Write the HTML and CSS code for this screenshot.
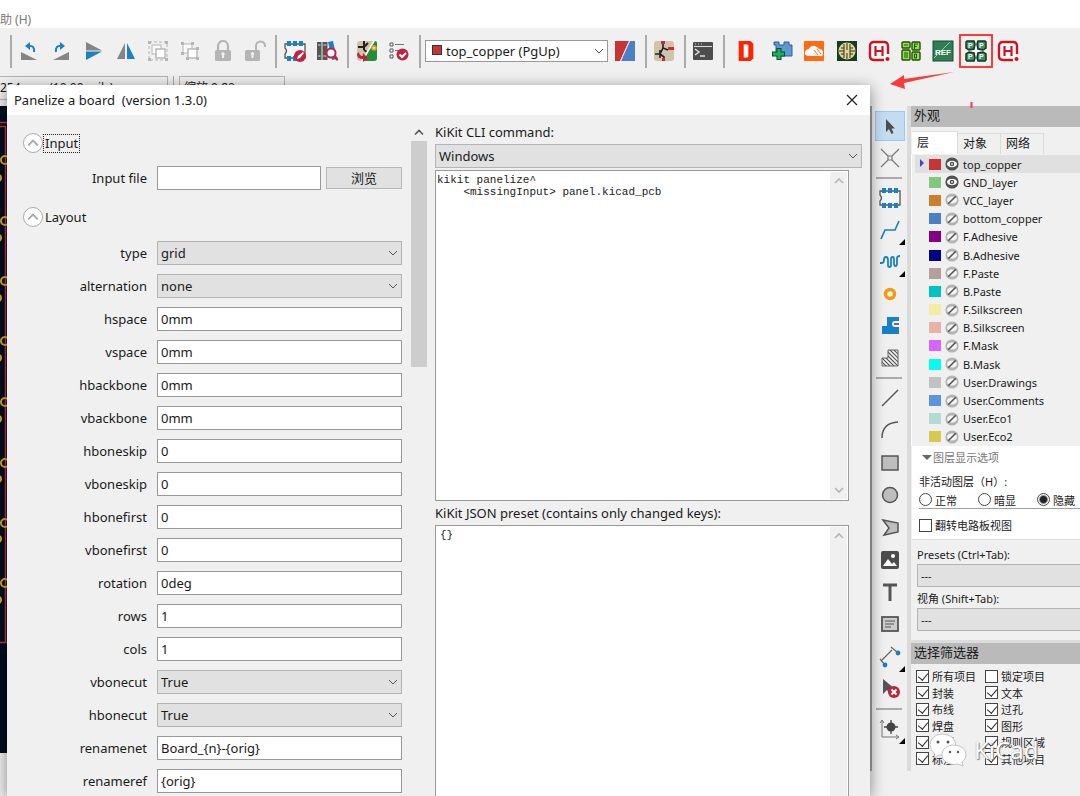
FILE: index.html
```html
<!DOCTYPE html>
<html lang="zh-CN">
<head>
<meta charset="utf-8">
<title>Panelize a board</title>
<link rel="stylesheet" href="styles.css">
</head>
<body>
<svg class="defs" aria-hidden="true">
  <defs>
    <symbol id="chev-down" viewBox="0 0 10 10"><path d="M1 3l4 4 4-4" fill="none" stroke="currentColor"/></symbol>
    <symbol id="chev-up" viewBox="0 0 10 10"><path d="M1 7l4-4 4 4" fill="none" stroke="currentColor" stroke-width="1.6"/></symbol>
    <symbol id="eye-on" viewBox="0 0 14 14"><circle cx="7" cy="7" r="6.6" fill="#505050"/><ellipse cx="7" cy="7" rx="5" ry="3.2" fill="#fff"/><circle cx="7" cy="7" r="2.3" fill="#505050"/><circle cx="7" cy="7" r="1" fill="#ddd"/></symbol>
    <symbol id="eye-off" viewBox="0 0 14 14"><circle cx="7" cy="7" r="6.6" fill="#b4b4b4"/><ellipse cx="7" cy="7" rx="5" ry="3.4" fill="#f4f4f4"/><path d="M3.2 10.8l7.6-7.6" stroke="#555" stroke-width="1.6"/></symbol>
    <symbol id="huaqiu" viewBox="0 0 22 22"><path d="M20 14V6q0-4-4-4H6Q2 2 2 6v10q0 4 4 4h10" fill="#fff" stroke="#d0121f" stroke-width="2.4"/><path d="M7.500 6v10M14.500 6v10M7 11h8" stroke="#d0121f" stroke-width="2.200"/><circle cx="19.500" cy="19" r="2" fill="#d0121f"/></symbol>
    <symbol id="footprint" viewBox="0 0 22 22"><path d="M1 4h20v14H1v-4q3-3 0-6z" fill="#f5f5f5" stroke="#555" stroke-width="1.3"/><path d="M3 1h4v5H3zM9 1h4v5H9zM15 1h4v5h-4zM3 16h4v5H3zM9 16h4v5H9zM15 16h4v5h-4z" fill="#1a81c4"/></symbol>
    <clipPath id="step"><path d="M9 3h10v16H3v-8h6z"/></clipPath>
  </defs>
</svg>
<div class="app">
  <nav class="menubar"><a class="menu" href="#">助 (H)</a></nav>

  <header class="toolbar">
    <span class="sep"></span>
    <div class="group wide">
      <button class="tool" aria-label="Rotate left"><svg viewBox="0 0 22 22"><path d="M3 12v8h16z" fill="#858585"/><path d="M10 6q7-1 6 6" fill="none" stroke="#1a81c4" stroke-width="2"/><path d="M7 6l5-4v8z" fill="#1a81c4"/></svg></button>
      <button class="tool" aria-label="Rotate right"><svg viewBox="0 0 22 22"><path d="M19 12v8H3z" fill="#858585"/><path d="M12 6q-7-1-6 6" fill="none" stroke="#1a81c4" stroke-width="2"/><path d="M15 6L10 2v8z" fill="#1a81c4"/></svg></button>
      <button class="tool" aria-label="Flip vertical"><svg viewBox="0 0 22 22"><path d="M3 2l16 8.400H3z" fill="#858585"/><path d="M3 20l16-8.400H3z" fill="#1a81c4"/></svg></button>
      <button class="tool" aria-label="Flip horizontal"><svg viewBox="0 0 22 22"><path d="M2 19L10 3v16z" fill="#858585"/><path d="M20 19L12 3v16z" fill="#1a81c4"/></svg></button>
      <button class="tool" aria-label="Group"><svg viewBox="0 0 22 22"><rect x="2" y="2" width="18" height="18" fill="none" stroke="#b5b5b5" stroke-dasharray="3 2"/><path d="M1 1h3v3H1zM18 1h3v3h-3zM1 18h3v3H1zM18 18h3v3h-3z" fill="#b5b5b5"/><rect x="5" y="5" width="9" height="9" fill="#fafafa" stroke="#b5b5b5"/><rect x="9" y="9" width="9" height="9" fill="#fff" stroke="#b5b5b5" stroke-width="1.4"/></svg></button>
      <button class="tool" aria-label="Ungroup"><svg viewBox="0 0 22 22"><rect x="4" y="4" width="9" height="9" fill="#fafafa" stroke="#b5b5b5"/><rect x="9" y="9" width="9" height="9" fill="#fff" stroke="#b5b5b5" stroke-width="1.400"/><path d="M2 2h3v3H2zM12 2h3v3h-3zM2 12h3v3H2zM17 7h3v3h-3zM7 17h3v3H7zM17 17h3v3h-3z" fill="#b5b5b5"/></svg></button>
      <button class="tool" aria-label="Lock"><svg viewBox="0 0 22 22"><path d="M6 11V6a5 5 0 0 1 10 0v5" fill="none" stroke="#b5b5b5" stroke-width="2.200"/><rect x="3" y="10" width="16" height="11" rx="1.500" fill="#b5b5b5"/><path d="M11 12a2 2 0 0 1 1 3.500V18h-2v-2.500a2 2 0 0 1 1-3.500" fill="#eee"/></svg></button>
      <button class="tool" aria-label="Unlock"><svg viewBox="0 0 22 22"><path d="M12 11V6a4.500 4.500 0 0 1 9 0v1" fill="none" stroke="#b5b5b5" stroke-width="2"/><rect x="1" y="10" width="15" height="11" rx="1.500" fill="#b5b5b5"/><path d="M8.500 12a2 2 0 0 1 1 3.500V18h-2v-2.500a2 2 0 0 1 1-3.500" fill="#eee"/></svg></button>
    </div>
    <span class="sep"></span>
    <div class="group pair">
      <button class="tool" aria-label="Footprint editor"><svg viewBox="0 0 22 22"><use href="#footprint"/><circle cx="16" cy="16" r="6" fill="#c0223f"/><path d="M13 19l1-3 5-4 1 1-4 5z" fill="#fff"/></svg></button>
      <button class="tool" aria-label="Footprint libraries"><svg viewBox="0 0 22 22"><path d="M1 2h4.500v18H1zM6.500 2h5v18h-5z" fill="#555"/><path d="M2 5h2.500M7.500 5h3M2 16h2.500M7.500 16h3" stroke="#ddd"/><path d="M12 2l5-1 4 18-5 1z" fill="#1a81c4"/><circle cx="15" cy="13" r="4.500" fill="#fff" stroke="#c0223f" stroke-width="2"/><path d="M18 16l4 4" stroke="#c0223f" stroke-width="2.500"/></svg></button>
    </div>
    <span class="sep"></span>
    <div class="group pair">
      <button class="tool" aria-label="Update PCB"><svg viewBox="0 0 22 22"><rect x="1" y="1" width="20" height="20" rx="3" fill="#d0c3a8"/><path d="M19 1q2 0 2 2v15q0 3-3 3H6z" fill="#2a8b37"/><path d="M8 1v9M2 7h6l4-4M8 10l3 2" stroke="#222" stroke-width="2" fill="none"/><path d="M6 21L18 1" stroke="#fff" stroke-width="1.600"/><circle cx="18" cy="8" r="2" fill="#ddd" stroke="#e2a51c" stroke-width="1.500"/><path d="M3 12q0 4 4 4v-3l5 5-5 4v-3q-6 0-6-5z" fill="#c0223f"/></svg></button>
      <button class="tool" aria-label="Design rules"><svg viewBox="0 0 22 22"><path d="M2 3h3v3H2zM2 9h3v3H2zM2 15h3v3H2z" fill="#fff" stroke="#555"/><path d="M7 4.500h9M7 10.500h4" stroke="#777"/><circle cx="14.500" cy="14.500" r="6" fill="#c0223f"/><path d="M11.500 14.500l2.500 2.500 4-4" fill="none" stroke="#fff" stroke-width="2"/></svg></button>
    </div>
    <span class="sep"></span>
    <div class="pick layer-pick">
      <i class="chip"></i>
      <select aria-label="Active layer"><option>top_copper (PgUp)</option></select>
      <svg class="chev"><use href="#chev-down"/></svg>
    </div>
    <div class="group">
      <button class="tool" aria-label="Layer pair"><svg viewBox="0 0 22 22"><path d="M1 1h14L6 21H1z" fill="#c83434"/><path d="M16 1h5v20H7z" fill="#4d7fc4"/><path d="M15.500 1L6.500 21" stroke="#ddd"/></svg></button>
    </div>
    <span class="sep"></span>
    <div class="group">
      <button class="tool" aria-label="Schematic"><svg viewBox="0 0 22 22"><rect x="1" y="1" width="20" height="20" rx="3" fill="#d0c3a8"/><path d="M10 2v6l5 2M2 14h5l3-6M7 10v8M7 14l4 3v4" fill="none" stroke="#222" stroke-width="1.600"/><path d="M8 1h4v3H8zM15 7h6v3h-6zM9 18h3v3H9z" fill="#d0243f"/></svg></button>
    </div>
    <span class="sep"></span>
    <div class="group">
      <button class="tool" aria-label="Console"><svg viewBox="0 0 22 22"><rect x="1" y="2" width="20" height="18" rx="1" fill="#4d4d4d"/><path d="M2 6.500h18" stroke="#ddd"/><path d="M3 4h1M6 4h1M9 4h1" stroke="#ccc"/><path d="M3 9l4 3-4 3M8 16h5" stroke="#ddd" stroke-width="1.500" fill="none"/></svg></button>
    </div>
    <span class="sep"></span>
    <div class="group letter">
      <button class="tool" aria-label="D plugin"><svg viewBox="0 0 22 24"><path d="M3 1h13l3 3v16l-3 3H3z" fill="#fb2405"/><path d="M8.500 5h4l1 1v12l-1 1h-4z" fill="#fff"/></svg></button>
    </div>
    <div class="group wide">
      <button class="tool" aria-label="Add board"><svg viewBox="0 0 22 22"><path d="M3 5V2h5v3h5V2h5v3h3v11H5V5z" fill="#5b9bd5" stroke="#2e5f91"/><path d="M8 8v12M1 14h13" stroke="#164a2a" stroke-width="5"/><path d="M8 9v10M2 14h11" stroke="#18b35c" stroke-width="3"/></svg></button>
      <button class="tool" aria-label="Cloud"><svg viewBox="0 0 22 22"><rect x="1" y="1" width="20" height="20" rx="1" fill="#ff6b12"/><path d="M5 16q-4-1-3-4t4-3q2-4 6-3 3 1 4 3 4 0 4 4t-3 3z" fill="#fff"/><path d="M11 10l4 5M14 9l4 5" stroke="#ff6b12"/></svg></button>
      <button class="tool" aria-label="Round board"><svg viewBox="0 0 22 22"><rect x="1" y="1" width="20" height="20" fill="#143d26"/><circle cx="11" cy="11" r="8.500" fill="#ecd490"/><path d="M8 4v14M11 3v7M11 13v6M14 4v14M3 11h5M14 11h5M5 8h3M14 8h3M5 14h3M14 14h3" stroke="#143d26" fill="none"/></svg></button>
      <button class="tool" aria-label="Huaqiu DFM"><svg viewBox="0 0 22 22"><use href="#huaqiu"/></svg></button>
      <button class="tool" aria-label="Fabrication files"><svg viewBox="0 0 22 22"><g fill="#8de83b" stroke="#274a12" stroke-width="1.400"><rect x="2" y="2" width="8" height="6" rx="1"/><rect x="12" y="2" width="8" height="8" rx="1"/><rect x="2" y="10" width="8" height="10" rx="1"/><rect x="12" y="12" width="8" height="8" rx="1"/></g><path d="M4 5h4M4 13h4M4 15h4M4 17h4M14.500 4v5M14 4h4M14 6.500h3M14.500 14h2v4h-2z" stroke="#274a12" fill="none"/></svg></button>
      <button class="tool" aria-label="Reference placer"><svg viewBox="0 0 22 22"><rect x="1" y="1" width="20" height="20" fill="#2f7d53" stroke="#1c4a33"/><path d="M2 18L18 2" stroke="#9fcdb3"/><text x="11" y="15" text-anchor="middle" class="glyph ref">REF</text></svg></button>
      <button class="tool marked" aria-label="KiKit panelize"><svg viewBox="0 0 22 22"><g fill="#3f8d60" stroke="#173222" stroke-width="1.500"><path d="M2 1h7l1 3-1 5-5 1-3-2V2zM13 1h7l1 1v6l-3 2-5-1-1-5zM2 21h7l1-3-1-5-5-1-3 2v6zM13 21h7l1-1v-6l-3-2-5 1-1 5z"/></g><path d="M11 7l1 3 3 1-3 1-1 3-1-3-3-1 3-1z" fill="#fff"/><g class="glyph pan"><text x="3" y="8">P</text><text x="14" y="8">P</text><text x="3" y="19">P</text><text x="14" y="19">P</text></g></svg></button>
      <button class="tool" aria-label="Huaqiu order"><svg viewBox="0 0 22 22"><use href="#huaqiu"/></svg></button>
    </div>
  </header>

  <div class="infobar">
    <span class="info track">254 mm (10.00 mils)</span>
    <span class="sep"></span>
    <span class="info zoomlevel">缩放 9.80</span>
  </div>

  <main class="workspace">
    <section class="board">
      <svg class="traces" width="7" height="647" viewBox="0 0 7 647">
        <path d="M0 16.500h7M0 20.500h5M5.500 20v517M0 536.500h7" stroke="#c8343a" stroke-width="1.500" fill="none"/>
        <g fill="none" stroke="#d4ab26" stroke-width="2"><circle cx="5" cy="54" r="4"/><circle cx="5" cy="115" r="4"/><circle cx="5" cy="175" r="4"/><circle cx="5" cy="235" r="4"/><circle cx="5" cy="296" r="4"/><circle cx="5" cy="357" r="4"/><circle cx="5" cy="417" r="4"/><circle cx="5" cy="477" r="4"/></g>
        <g fill="#d4ab26"><circle cx="-2" cy="72" r="4"/><circle cx="-2" cy="132" r="4"/><circle cx="-2" cy="192" r="4"/><circle cx="-2" cy="252" r="4"/><circle cx="-2" cy="313" r="4"/><circle cx="-2" cy="373" r="4"/><circle cx="-2" cy="433" r="4"/><circle cx="-2" cy="494" r="4"/></g>
      </svg>
    </section>

    <aside class="rail">
      <div class="stack two">
        <button class="tool selected" aria-label="Select"><svg viewBox="0 0 22 22"><path d="M7 4v13l3-3 2.500 5 2-1-2-4.500H16z" fill="#4d4d4d"/></svg></button>
        <button class="tool" aria-label="Local ratsnest"><svg viewBox="0 0 22 22"><path d="M2 2l7 7M20 2l-7 7M2 20l7-7M20 20l-7-7M9 9h4v4H9z" fill="none" stroke="#777" stroke-width="1.200"/></svg></button>
      </div>
      <hr class="rule">
      <div class="stack six">
        <button class="tool" aria-label="Footprint"><svg viewBox="0 0 22 22"><use href="#footprint"/></svg></button>
        <button class="tool more" aria-label="Route track"><svg viewBox="0 0 22 22"><path d="M2 20l4-9h10l4-9" fill="none" stroke="#1a81c4" stroke-width="1.700"/></svg></button>
        <button class="tool more" aria-label="Tune length"><svg viewBox="0 0 22 22"><path d="M1 12h2q2 0 2-3t2-3 2 3v5q0 2 1.500 2t1.500-2V8q0-2 1.500-2T15 8v4q0 3 1.500 3t1.500-3V7q0-2 3-2" fill="none" stroke="#1a81c4" stroke-width="1.800"/></svg></button>
        <button class="tool" aria-label="Via"><svg viewBox="0 0 22 22"><circle cx="11" cy="11" r="4.500" fill="none" stroke="#f59b0b" stroke-width="3.400"/></svg></button>
        <button class="tool" aria-label="Zone"><svg viewBox="0 0 22 22"><path d="M8 2h12v4h-4q-3 0-3 3t3 3h4v7H3v-8h5z" fill="#1a81c4"/><path d="M15 9h5" stroke="#444" stroke-width="1.500"/></svg></button>
        <button class="tool" aria-label="Rule area"><svg viewBox="0 0 22 22"><g clip-path="url(#step)"><path d="M2 2h18v18H2z" fill="#f4f4f4"/><path d="M-2 10l14 14M2 10l14 14M2 6l18 18M4 4l18 18M4 0l18 18M8 0l14 14M12 0l10 10M16 0l6 6" stroke="#555" stroke-width="1.200"/></g><path d="M9 3h10v16H3v-8h6z" fill="none" stroke="#666"/></svg></button>
      </div>
      <hr class="rule">
      <div class="stack ten">
        <button class="tool" aria-label="Line"><svg viewBox="0 0 22 22"><path d="M3 19L19 3" stroke="#555" stroke-width="1.500"/></svg></button>
        <button class="tool" aria-label="Arc"><svg viewBox="0 0 22 22"><path d="M3 19Q3 4 19 3" fill="none" stroke="#555" stroke-width="1.500"/></svg></button>
        <button class="tool" aria-label="Rectangle"><svg viewBox="0 0 22 22"><rect x="3" y="4" width="16" height="14" fill="#bebebe" stroke="#555" stroke-width="1.500"/></svg></button>
        <button class="tool" aria-label="Circle"><svg viewBox="0 0 22 22"><circle cx="11" cy="11" r="7.500" fill="#bebebe" stroke="#555" stroke-width="1.500"/></svg></button>
        <button class="tool" aria-label="Polygon"><svg viewBox="0 0 22 22"><path d="M4 4l15 3v9L5 19l5-7z" fill="#bebebe" stroke="#555" stroke-width="1.500"/></svg></button>
        <button class="tool" aria-label="Image"><svg viewBox="0 0 22 22"><rect x="2" y="2" width="18" height="18" rx="2" fill="#4d4d4d"/><path d="M4 17l5-7 4 5 2-2 3 4z" fill="#fff"/><circle cx="14" cy="7" r="2" fill="#fff"/></svg></button>
        <button class="tool" aria-label="Text"><svg viewBox="0 0 22 22"><path d="M4 4h14M11 4v16" stroke="#555" stroke-width="3"/></svg></button>
        <button class="tool" aria-label="Text box"><svg viewBox="0 0 22 22"><rect x="3" y="4" width="16" height="14" fill="#ccc" stroke="#555" stroke-width="1.800"/><path d="M6 8h10M6 11h9M6 14h6" stroke="#555" stroke-width="1.200"/></svg></button>
        <button class="tool more" aria-label="Dimension"><svg viewBox="0 0 22 22"><path d="M3 14L13 4M1 13l5 6M12 1l6 5" stroke="#666" stroke-width="1.200"/><circle cx="6" cy="19" r="2.400" fill="#1a81c4"/><circle cx="19" cy="7" r="2.400" fill="#1a81c4"/></svg></button>
        <button class="tool" aria-label="Delete"><svg viewBox="0 0 22 22"><path d="M4 1v15l4-4 3 5 2-2-2-4h5z" fill="#555"/><circle cx="15" cy="14" r="6" fill="#c0223f"/><path d="M12.500 11.500l5 5M17.500 11.500l-5 5" stroke="#fff" stroke-width="2"/></svg></button>
      </div>
      <hr class="rule">
      <div class="stack one">
        <button class="tool more" aria-label="Origin"><svg viewBox="0 0 22 22"><path d="M3 3v16h16M1 5l2-3 2 3M17 17l3 2-3 2" fill="none" stroke="#777"/><circle cx="12" cy="9" r="4.500" fill="#444"/><path d="M12 2v14M5 9h14" stroke="#444" stroke-width="1.300"/></svg></button>
      </div>
    </aside>

    <aside class="panel">
      <h2 class="caption">外观</h2>
      <div class="tabs"><button class="tab current">层</button><button class="tab">对象</button><button class="tab">网络</button></div>
      <ul class="layers">
        <li class="layer active"><i class="swatch c1"></i><svg class="eye"><use href="#eye-on"/></svg>top_copper</li>
        <li class="layer"><i class="swatch c2"></i><svg class="eye"><use href="#eye-on"/></svg>GND_layer</li>
        <li class="layer"><i class="swatch c3"></i><svg class="eye"><use href="#eye-off"/></svg>VCC_layer</li>
        <li class="layer"><i class="swatch c4"></i><svg class="eye"><use href="#eye-off"/></svg>bottom_copper</li>
        <li class="layer"><i class="swatch c5"></i><svg class="eye"><use href="#eye-off"/></svg>F.Adhesive</li>
        <li class="layer"><i class="swatch c6"></i><svg class="eye"><use href="#eye-off"/></svg>B.Adhesive</li>
        <li class="layer"><i class="swatch c7"></i><svg class="eye"><use href="#eye-off"/></svg>F.Paste</li>
        <li class="layer"><i class="swatch c8"></i><svg class="eye"><use href="#eye-off"/></svg>B.Paste</li>
        <li class="layer"><i class="swatch c9"></i><svg class="eye"><use href="#eye-off"/></svg>F.Silkscreen</li>
        <li class="layer"><i class="swatch c10"></i><svg class="eye"><use href="#eye-off"/></svg>B.Silkscreen</li>
        <li class="layer"><i class="swatch c11"></i><svg class="eye"><use href="#eye-off"/></svg>F.Mask</li>
        <li class="layer"><i class="swatch c12"></i><svg class="eye"><use href="#eye-off"/></svg>B.Mask</li>
        <li class="layer"><i class="swatch c13"></i><svg class="eye"><use href="#eye-off"/></svg>User.Drawings</li>
        <li class="layer"><i class="swatch c14"></i><svg class="eye"><use href="#eye-off"/></svg>User.Comments</li>
        <li class="layer"><i class="swatch c15"></i><svg class="eye"><use href="#eye-off"/></svg>User.Eco1</li>
        <li class="layer"><i class="swatch c16"></i><svg class="eye"><use href="#eye-off"/></svg>User.Eco2</li>
      </ul>
      <div class="display">
        <button class="fold"><i class="caret"></i>图层显示选项</button>
        <div class="hint">非活动图层（H）:</div>
        <div class="radios">
          <label><input type="radio" name="inactive">正常</label>
          <label><input type="radio" name="inactive">暗显</label>
          <label><input type="radio" name="inactive" checked>隐藏</label>
        </div>
        <label class="flip"><input type="checkbox">翻转电路板视图</label>
      </div>
      <div class="presets">
        <label for="presets">Presets (Ctrl+Tab):</label>
        <select id="presets"><option>---</option></select>
        <label for="views">视角 (Shift+Tab):</label>
        <select id="views"><option>---</option></select>
      </div>
      <h2 class="caption">选择筛选器</h2>
      <div class="filters">
        <label><input type="checkbox" checked>所有项目</label><label><input type="checkbox">锁定项目</label>
        <label><input type="checkbox" checked>封装</label><label><input type="checkbox" checked>文本</label>
        <label><input type="checkbox" checked>布线</label><label><input type="checkbox" checked>过孔</label>
        <label><input type="checkbox" checked>焊盘</label><label><input type="checkbox" checked>图形</label>
        <label><input type="checkbox" checked>敷铜</label><label><input type="checkbox" checked>规则区域</label>
        <label><input type="checkbox" checked>标注</label><label><input type="checkbox" checked>其他项目</label>
        <div class="watermark">
          <svg width="38" height="34" viewBox="0 0 38 34"><g fill="#fff" stroke="#c4c4c4"><path d="M14 1C6 1 1 6 1 12q0 5 5 9l-1 4 5-3q13 2 17-6Q28 2 14 1z"/><path d="M25 12c-7 0-12 4-12 10s7 11 16 9l5 2-1-4q4-3 4-7 0-9-12-10z"/></g><g fill="#555"><circle cx="9" cy="9" r="1.500"/><circle cx="19" cy="9" r="1.500"/><circle cx="21" cy="19" r="1.200"/><circle cx="29" cy="19" r="1.200"/></g></svg>
          <span>KiCad</span>
        </div>
      </div>
    </aside>
  </main>
  <footer class="status"></footer>

  <svg class="marks" width="90" height="42" viewBox="0 0 90 42"><path d="M0 18l14-9v4l50-7-50 11 1 6z" fill="#fb3b3b"/><path d="M81.500 36v6" stroke="#fb3b3b" stroke-width="2"/></svg>

  <div class="dialog" role="dialog" aria-label="Panelize a board">
    <div class="titlebar"><span class="title">Panelize a board&nbsp; (version 1.3.0)</span><button class="close" aria-label="Close"><svg width="12" height="12" viewBox="0 0 12 12"><path d="M1 1l10 10M11 1L1 11" stroke="#222" stroke-width="1.200"/></svg></button></div>
    <div class="columns">
      <form class="form">
        <button type="button" class="section"><span class="disc"><svg width="12" height="12"><use href="#chev-up"/></svg></span><span class="name focus">Input</span></button>
        <div class="field file"><label for="file">Input file</label><input id="file" type="text"><button type="button" class="browse">浏览</button></div>
        <button type="button" class="section second"><span class="disc"><svg width="12" height="12"><use href="#chev-up"/></svg></span><span class="name">Layout</span></button>
        <div class="field"><label for="type">type</label><div class="pick"><select id="type"><option>grid</option></select><svg class="chev"><use href="#chev-down"/></svg></div></div>
        <div class="field"><label for="alternation">alternation</label><div class="pick"><select id="alternation"><option>none</option></select><svg class="chev"><use href="#chev-down"/></svg></div></div>
        <div class="field"><label for="hspace">hspace</label><input id="hspace" type="text" value="0mm"></div>
        <div class="field"><label for="vspace">vspace</label><input id="vspace" type="text" value="0mm"></div>
        <div class="field"><label for="hbackbone">hbackbone</label><input id="hbackbone" type="text" value="0mm"></div>
        <div class="field"><label for="vbackbone">vbackbone</label><input id="vbackbone" type="text" value="0mm"></div>
        <div class="field"><label for="hboneskip">hboneskip</label><input id="hboneskip" type="text" value="0"></div>
        <div class="field"><label for="vboneskip">vboneskip</label><input id="vboneskip" type="text" value="0"></div>
        <div class="field"><label for="hbonefirst">hbonefirst</label><input id="hbonefirst" type="text" value="0"></div>
        <div class="field"><label for="vbonefirst">vbonefirst</label><input id="vbonefirst" type="text" value="0"></div>
        <div class="field"><label for="rotation">rotation</label><input id="rotation" type="text" value="0deg"></div>
        <div class="field"><label for="rows">rows</label><input id="rows" type="text" value="1"></div>
        <div class="field"><label for="cols">cols</label><input id="cols" type="text" value="1"></div>
        <div class="field"><label for="vbonecut">vbonecut</label><div class="pick"><select id="vbonecut"><option>True</option></select><svg class="chev"><use href="#chev-down"/></svg></div></div>
        <div class="field"><label for="hbonecut">hbonecut</label><div class="pick"><select id="hbonecut"><option>True</option></select><svg class="chev"><use href="#chev-down"/></svg></div></div>
        <div class="field"><label for="renamenet">renamenet</label><input id="renamenet" type="text" value="Board_{n}-{orig}"></div>
        <div class="field"><label for="renameref">renameref</label><input id="renameref" type="text" value="{orig}"></div>
      </form>
      <div class="scroll"><svg width="10" height="16" viewBox="0 0 10 10"><use href="#chev-up"/></svg><i class="thumb"></i></div>
      <div class="output">
        <label for="shell">KiKit CLI command:</label>
        <div class="pick"><select id="shell"><option>Windows</option></select><svg class="chev"><use href="#chev-down"/></svg></div>
        <div class="editor cli">
          <textarea aria-label="Command" spellcheck="false">kikit panelize^
    &lt;missingInput&gt; panel.kicad_pcb</textarea>
          <div class="track-bar"><svg width="10" height="10"><use href="#chev-up"/></svg><svg class="turned" width="10" height="10"><use href="#chev-up"/></svg></div>
        </div>
        <label for="json">KiKit JSON preset (contains only changed keys):</label>
        <div class="editor json">
          <textarea id="json" spellcheck="false">{}</textarea>
          <div class="track-bar"><svg width="10" height="10"><use href="#chev-up"/></svg></div>
        </div>
      </div>
    </div>
  </div>
</div>
</body>
</html>
```
FILE: styles.css
```css
* { box-sizing: border-box; }
body { margin: 0; font-family: "Noto Sans", "Noto Sans CJK SC", sans-serif; font-size: 13px; color: #1a1a1a; background: #f0f0f0; }
button, input, select, textarea { font: inherit; color: inherit; margin: 0; }
button { border: 0; background: none; padding: 0; }
svg { display: block; }
.defs { position: absolute; width: 0; height: 0; }
.app { position: relative; height: 100vh; display: flex; flex-direction: column; overflow: hidden; }

.menubar { height: 28px; background: #fff; display: flex; align-items: flex-end; }
.menu { color: #777; text-decoration: none; font-size: 12px; line-height: 16px; }

.toolbar { display: flex; align-items: center; height: 46px; padding-left: 6px; flex: none; }
.sep { height: 33px; flex: none; border-right: 2px solid #ababab; }
.toolbar .sep { width: 6px; margin-right: 1px; }
.group { display: flex; flex: none; }
.group .tool { width: 32px; height: 32px; }
.pair { margin-left: 1px; }
.wide { width: 258px; }
.wide .tool { flex: 1; width: auto; }
.letter { padding-left: 4px; width: 40px; }
.letter svg { height: 24px; }
.tool { display: grid; place-items: center; position: relative; }
.tool svg { width: 22px; height: 22px; }
.marked { outline: 2px solid #f93b3b; outline-offset: -1px; }
.glyph { font-family: "Liberation Sans", sans-serif; font-weight: bold; fill: #fff; }
.ref { font-size: 8px; }
.pan { font-size: 7px; }

.pick { position: relative; }
select { appearance: none; width: 100%; height: 24px; display: block; padding: 0 20px 0 3px; background: #e1e1e1; border: 1px solid #b4b4b4; border-radius: 0; }
.chev { position: absolute; right: 4px; top: 7px; width: 10px; height: 10px; color: #555; }
.layer-pick { width: 183px; margin: 0 1px 0 3px; flex: none; }
.layer-pick select { padding-left: 20px; height: 22px; background: #fff; border-color: #999; }
.layer-pick .chev { top: 6px; }
.chip { position: absolute; left: 7px; top: 5px; width: 10px; height: 10px; background: #c83434; border: 1px solid #333; }

.infobar { display: flex; height: 32px; padding-top: 2px; flex: none; gap: 5px; align-items: flex-start; }
.infobar .sep { width: 1px; height: 26px; border-right-width: 1px; }
.info { height: 24px; line-height: 22px; border: 1px solid #b4b4b4; font-size: 12px; white-space: nowrap; }
.track { width: 168px; border-left: 0; }
.zoomlevel { width: 106px; padding-left: 4px; }

.workspace { flex: 1; display: flex; min-height: 0; }
.status { height: 25px; flex: none; }
.board { flex: 1; border-right: 2px solid #a0a0a0; padding-bottom: 18px; min-width: 0; }
.traces { background: #000e20; height: 100%; }
.rail { width: 39px; padding: 4px 3px 0 2px; border-right: 4px solid #dadada; flex: none; }
.stack { display: grid; grid-auto-rows: 1fr; }
.two { height: 64px; }
.six { height: 192px; }
.ten { height: 323px; }
.one { height: 32px; }
.rail .tool { width: 32px; }
.rail .selected { background: #c3dcf2; border: 1px solid #9ac9ee; margin: 1px; width: 30px; }
.rule { height: 2px; margin: 3px 2px; border: 0; background: #ababab; }
.more::after { content: ""; position: absolute; right: 1px; bottom: 1px; border: 3px solid #000; border-top-color: transparent; border-left-color: transparent; }

.panel { width: 169px; flex: none; white-space: nowrap; font-size: 11px; display: flex; flex-direction: column; }
.caption { margin: 0; height: 21px; line-height: 18px; padding-left: 3px; background: #bababa; font-size: 13px; font-weight: normal; flex: none; }
.tabs { display: flex; align-items: flex-end; padding: 4px 0 0 1px; flex: none; }
.tab { width: 43px; height: 21px; border: 1px solid #dcdcdc; border-left: 0; border-bottom: 0; font-size: 12px; line-height: 20px; padding: 0 0 0 5px; text-align: left; }
.current { width: 46px; height: 23px; background: #fff; }
.layers { list-style: none; margin: 1px 0 0; padding: 0 0 0 3px; height: 291px; display: grid; grid-auto-rows: 1fr; flex: none; border-left: 1px solid #fff; }
.layer { display: flex; align-items: center; padding-left: 14px; gap: 4px; position: relative; }
.active { background: #e0e0e0; }
.active::before { content: ""; position: absolute; left: 5px; top: 4px; border: 4px solid transparent; border-left-color: #4040f0; border-right: 0; }
.swatch { width: 12px; height: 11px; }
.eye { width: 14px; height: 14px; }
.c1 { background: #c83434; } .c2 { background: #7fc87f; } .c3 { background: #ce7d2c; } .c4 { background: #4d7fc4; }
.c5 { background: #840084; } .c6 { background: #000084; } .c7 { background: #b4a09a; } .c8 { background: #00c2c2; }
.c9 { background: #f2eda1; } .c10 { background: #e8b2a7; } .c11 { background: #d864ff; } .c12 { background: #02ffee; }
.c13 { background: #c2c2c2; } .c14 { background: #5994dc; } .c15 { background: #b4dbd2; } .c16 { background: #d8c852; }
.display { background: #fff; height: 94px; padding: 1px 0 0 7px; flex: none; border-bottom: 1px solid #dcdcdc; margin-left: 1px; }
.fold { display: flex; align-items: center; color: #777; height: 20px; gap: 1px; padding-left: 3px; }
.caret { border: 5px solid transparent; border-top-color: #666; border-bottom: 0; }
.hint { height: 26px; line-height: 30px; }
.radios { display: flex; gap: 21px; height: 16px; border-bottom: 1px solid #a0a0a0; padding-bottom: 2px; }
label { display: flex; align-items: center; }
.radios label { gap: 3px; }
.display input, .filters input { appearance: none; width: 13px; height: 13px; border: 1px solid #444; background: #fff; flex: none; position: relative; }
.radios input { border-radius: 50%; }
.radios input:checked { background: radial-gradient(#222 3px, #fff 5px); }
.flip { height: 32px; gap: 3px; }
.presets { padding: 6px 0 0 6px; height: 103px; flex: none; border-bottom: 3px solid #dcdcdc; }
.presets label { height: 18px; padding-bottom: 2px; }
.presets select { border-right: 0; margin-bottom: 3px; height: 23px; }
.filters { position: relative; display: grid; grid-template-columns: 69px 1fr; grid-auto-rows: 1fr; height: 99px; padding-left: 5px; flex: none; margin-top: 4px; }
.filters label { gap: 3px; }
.filters input:checked::after { content: ""; position: absolute; left: 3px; top: 0; width: 5px; height: 8px; border: solid #333; border-width: 0 1px 1px 0; transform: rotate(40deg); }
.watermark { position: absolute; left: 18px; top: 65px; display: flex; align-items: center; gap: 7px; color: #fff; font-size: 24px; line-height: 32px; text-shadow: 1px 1px 1px #777, 0 0 1px #888; }

.marks { position: absolute; right: 100px; top: 66px; }

.dialog { position: absolute; left: 7px; right: 210px; top: 85px; bottom: 0; background: #f0f0f0; box-shadow: 0 3px 14px rgba(0, 0, 0, 0.45); display: flex; flex-direction: column; overflow: hidden; }
.titlebar { height: 30px; background: #fff; display: flex; align-items: center; justify-content: space-between; padding: 0 12px 0 7px; flex: none; }
.columns { flex: 1; display: grid; grid-template-columns: 395px 17px 1fr; min-height: 0; }
.form { padding-top: 16px; }
.section { display: flex; align-items: center; height: 24px; padding-left: 16px; gap: 1px; }
.disc { width: 20px; height: 20px; border: 1px solid #aaa; border-radius: 50%; background: #fff; display: grid; place-items: center; color: #aaa; }
.name { line-height: 17px; padding: 0 1px; }
.focus { outline: 1px dotted #222; }
.second { margin: 4px 0 7px; }
.field { display: grid; grid-template-columns: 140px 1fr; column-gap: 10px; height: 33px; align-items: center; }
.field label { justify-content: flex-end; }
.field input { width: 100%; height: 24px; background: #fff; border: 1px solid #999; padding: 0 3px; }
.file { grid-template-columns: 140px 1fr 76px; margin-top: 6px; height: 40px; padding-bottom: 7px; }
.file input { width: calc(100% + 5px); }
.browse { height: 22px; background: #e1e1e1; border: 1px solid #b8b8b8; }
.scroll { margin: 9px 0 0 9px; display: flex; flex-direction: column; align-items: center; color: #555; width: 16px; }
.scroll svg { flex: none; height: 17px; }
.thumb { width: 16px; height: 226px; background: #cdcdcd; }
.output { padding: 7px 8px 0 16px; display: flex; flex-direction: column; min-height: 0; }
.output label { height: 22px; padding-bottom: 2px; flex: none; }
.editor { display: flex; border: 1px solid #999; background: #fff; margin-right: 13px; flex: none; }
.cli { height: 331px; margin-top: 2px; margin-bottom: 2px; }
.json { flex: 1; border-bottom: 0; }
.editor textarea { flex: 1; border: 0; resize: none; padding: 3px 1px; background: none; font-family: "Liberation Mono", monospace; font-size: 11px; line-height: 12px; overflow: hidden; }
.editor.json textarea { padding-left: 4px; }
.track-bar { width: 17px; margin: 1px; background: #f0f0f0; color: #b5b5b5; display: flex; flex-direction: column; justify-content: space-between; align-items: center; padding: 4px 0; }
.turned { transform: rotate(180deg); }
```
